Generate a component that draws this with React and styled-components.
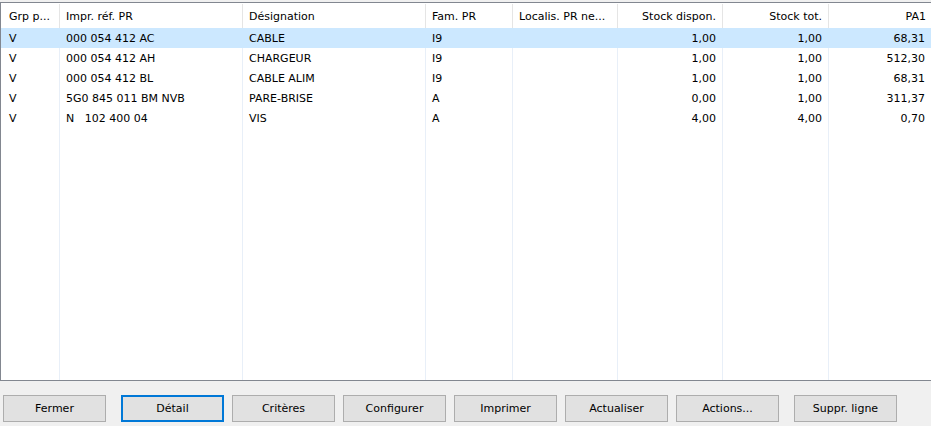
import React from 'react';
import styled, { createGlobalStyle, css } from 'styled-components';

const GlobalStyle = createGlobalStyle`
  html, body {
    margin: 0;
    padding: 0;
    background: #f0f0f0;
    overflow: hidden;
  }
  body {
    font-family: "DejaVu Sans", Verdana, sans-serif;
    font-size: 11px;
    color: #000;
  }
`;

const columns = [
  { key: 'grp', label: 'Grp p...', width: 59, first: true },
  { key: 'ref', label: 'Impr. réf. PR', width: 183 },
  { key: 'des', label: 'Désignation', width: 183 },
  { key: 'fam', label: 'Fam. PR', width: 87 },
  { key: 'loc', label: 'Localis. PR ne...', width: 105 },
  { key: 'dispo', label: 'Stock dispon.', width: 105, right: true },
  { key: 'tot', label: 'Stock tot.', width: 106, right: true },
  { key: 'pa1', label: 'PA1', width: 103, right: true, last: true },
];

const rows = [
  { grp: 'V', ref: '000 054 412 AC', des: 'CABLE', fam: 'I9', loc: '', dispo: '1,00', tot: '1,00', pa1: '68,31', selected: true },
  { grp: 'V', ref: '000 054 412 AH', des: 'CHARGEUR', fam: 'I9', loc: '', dispo: '1,00', tot: '1,00', pa1: '512,30' },
  { grp: 'V', ref: '000 054 412 BL', des: 'CABLE ALIM', fam: 'I9', loc: '', dispo: '1,00', tot: '1,00', pa1: '68,31' },
  { grp: 'V', ref: '5G0 845 011 BM NVB', des: 'PARE-BRISE', fam: 'A', loc: '', dispo: '0,00', tot: '1,00', pa1: '311,37' },
  { grp: 'V', ref: 'N\u00a0\u00a0\u00a0102 400 04', des: 'VIS', fam: 'A', loc: '', dispo: '4,00', tot: '4,00', pa1: '0,70' },
];

const buttons = [
  { label: 'Fermer' },
  { label: 'Détail', isDefault: true, spaced: true },
  { label: 'Critères' },
  { label: 'Configurer' },
  { label: 'Imprimer' },
  { label: 'Actualiser' },
  { label: 'Actions...' },
  { label: 'Suppr. ligne', spaced: true },
];

const Window = styled.div`
  display: flex;
  flex-direction: column;
  width: 931px;
  height: 426px;
  padding-top: 2px;
  box-sizing: border-box;
`;

const ListView = styled.div`
  display: flex;
  flex-direction: column;
  height: 379px;
  width: 932px;
  box-sizing: border-box;
  border: 1px solid #828790;
  border-right: none;
  background: #fff;
`;

const HeaderRow = styled.div`
  display: flex;
  height: 25px;
  flex-shrink: 0;
`;

const HeaderCell = styled.div`
  display: flex;
  align-items: center;
  justify-content: ${({ $right }) => ($right ? 'flex-end' : 'flex-start')};
  width: ${({ $width }) => $width}px;
  flex-shrink: 0;
  box-sizing: border-box;
  padding: 1px 6px 0 ${({ $first }) => ($first ? 8 : 6)}px;
  white-space: nowrap;
  overflow: hidden;
  ${({ $last }) => !$last && css`
    border-right: 1px solid #e5e5e5;
    margin-top: 1px;
  `}
`;

const Body = styled.div`
  display: flex;
  flex-direction: column;
  flex: 1;
`;

const Row = styled.div`
  display: flex;
  height: 20px;
  background: ${({ $selected }) => ($selected ? '#cce8ff' : 'transparent')};
`;

const FillerRow = styled.div`
  display: flex;
  flex: 1;
`;

const Cell = styled.div`
  display: flex;
  align-items: center;
  justify-content: ${({ $right }) => ($right ? 'flex-end' : 'flex-start')};
  width: ${({ $width }) => $width}px;
  flex-shrink: 0;
  box-sizing: border-box;
  padding: 0 6px 0 ${({ $first }) => ($first ? 8 : 6)}px;
  white-space: pre;
  overflow: hidden;
  border-right: 1px solid ${({ $selected, $last }) => ($last ? 'transparent' : $selected ? '#cce8ff' : '#e8eff8')};
`;

const ButtonBar = styled.div`
  display: flex;
  align-items: center;
  gap: 8px;
  padding: 14px 0 0 3px;
`;

const Button = styled.button`
  width: 103px;
  height: 27px;
  margin-left: ${({ $spaced }) => ($spaced ? 7 : 0)}px;
  box-sizing: border-box;
  background: #e1e1e1;
  border: 1px solid #adadad;
  border-radius: 0;
  font-family: "DejaVu Sans", Verdana, sans-serif;
  font-size: 11px;
  color: #000;
  padding: 0;
  ${({ $isDefault }) => $isDefault && css`
    border: 2px solid #0078d7;
  `}
`;

export default function App() {
  return (
    <>
      <GlobalStyle />
      <Window>
        <ListView>
          <HeaderRow>
            {columns.map((c) => (
              <HeaderCell key={c.key} $width={c.width} $right={c.right} $first={c.first} $last={c.last}>
                {c.label}
              </HeaderCell>
            ))}
          </HeaderRow>
          <Body>
            {rows.map((r, i) => (
              <Row key={i} $selected={r.selected}>
                {columns.map((c) => (
                  <Cell key={c.key} $width={c.width} $right={c.right} $first={c.first} $last={c.last} $selected={r.selected}>
                    {r[c.key]}
                  </Cell>
                ))}
              </Row>
            ))}
            <FillerRow>
              {columns.map((c) => (
                <Cell key={c.key} $width={c.width} $last={c.last} />
              ))}
            </FillerRow>
          </Body>
        </ListView>
        <ButtonBar>
          {buttons.map((b) => (
            <Button key={b.label} $isDefault={b.isDefault} $spaced={b.spaced}>
              {b.label}
            </Button>
          ))}
        </ButtonBar>
      </Window>
    </>
  );
}
